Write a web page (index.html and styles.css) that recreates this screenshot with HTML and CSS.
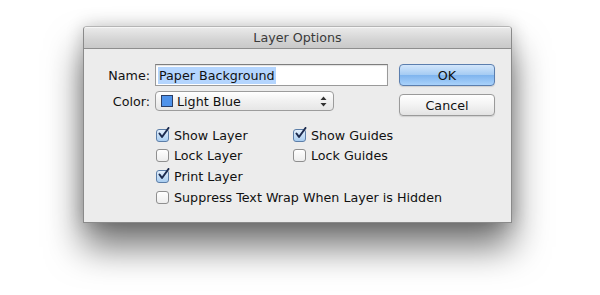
FILE: index.html
```html
<!DOCTYPE html>
<html>
<head>
<meta charset="utf-8">
<link rel="stylesheet" href="styles.css">
</head>
<body>
<div class="dialog">
  <div class="titlebar">Layer Options</div>
  <div class="content">
    <div class="top">
      <div class="form">
        <label class="lbl">Name:</label>
        <div class="input"><span class="sel">Paper Background</span></div>
        <label class="lbl">Color:</label>
        <div class="select">
          <span class="swatch"></span>
          <span class="seltext">Light Blue</span>
          <svg class="arrows" width="7" height="11" viewBox="0 0 7 11"><path d="M3.5 0.5 L6.5 4 L0.5 4 Z M0.5 7 L6.5 7 L3.5 10.5 Z" fill="#333"/></svg>
        </div>
      </div>
      <div class="buttons">
        <button class="btn ok">OK</button>
        <button class="btn">Cancel</button>
      </div>
    </div>
    <div class="checks">
      <div class="cb"><span class="box on"><svg width="13" height="13" viewBox="0 0 13 13"><path d="M2.5 6.5 L5 10 L11.5 1" fill="none" stroke="#1c2b4f" stroke-width="2" stroke-linecap="round" stroke-linejoin="round"/></svg></span>Show Layer</div>
      <div class="cb"><span class="box on"><svg width="13" height="13" viewBox="0 0 13 13"><path d="M2.5 6.5 L5 10 L11.5 1" fill="none" stroke="#1c2b4f" stroke-width="2" stroke-linecap="round" stroke-linejoin="round"/></svg></span>Show Guides</div>
      <div class="cb"><span class="box"></span>Lock Layer</div>
      <div class="cb"><span class="box"></span>Lock Guides</div>
      <div class="cb"><span class="box on"><svg width="13" height="13" viewBox="0 0 13 13"><path d="M2.5 6.5 L5 10 L11.5 1" fill="none" stroke="#1c2b4f" stroke-width="2" stroke-linecap="round" stroke-linejoin="round"/></svg></span>Print Layer</div>
      <div></div>
      <div class="cb wide"><span class="box"></span>Suppress Text Wrap When Layer is Hidden</div>
    </div>
  </div>
</div>
</body>
</html>
```
FILE: styles.css
```css
html {
  margin: 0;
  height: 100%;
  background: #ffffff;
}
body {
  margin: 0;
  box-sizing: border-box;
  min-height: 295px;
  padding: 26px 0 0 83px;
  font-family: "DejaVu Sans", "Liberation Sans", sans-serif;
  font-size: 12.7px;
  color: #111;
}
.dialog {
  width: 427px;
  height: 195px;
  border: 1px solid #8a8a8a;
  border-top-color: #b5b5b5;
  border-radius: 4px 4px 0 0;
  background: #ececec;
  box-shadow: 0 24px 36px rgba(0,0,0,0.55), 0 0 18px rgba(0,0,0,0.2);
  overflow: hidden;
}
.titlebar {
  height: 21px;
  line-height: 22px;
  text-align: center;
  color: #3a3a3a;
  font-size: 12.7px;
  background: linear-gradient(#ebebeb, #d4d4d4 60%, #c9c9c9);
  border-bottom: 1px solid #8e8e8e;
  box-shadow: inset 0 1px 0 #f6f6f6;
}
.content {
  padding: 15px 16px 0 0;
}
.top {
  display: flex;
  gap: 11px;
}
.form {
  display: grid;
  grid-template-columns: 66px 233px;
  column-gap: 5px;
  row-gap: 5px;
  align-content: start;
  align-items: center;
}
.lbl {
  text-align: right;
}
.input {
  height: 20px;
  border: 1px solid #9a9a9a;
  border-top-color: #7e7e7e;
  background: #fff;
  box-shadow: inset 0 1px 1px rgba(0,0,0,0.12);
  display: flex;
  align-items: center;
  padding-left: 2px;
}
.sel {
  background: #b4d5fe;
  line-height: 17px;
  padding: 0 1px;
}
.select {
  width: 172px;
  height: 18px;
  border: 1px solid #9c9c9c;
  border-radius: 4px;
  background: linear-gradient(#ffffff, #f1f1f1 50%, #e6e6e6);
  display: flex;
  align-items: center;
  padding-left: 5px;
}
.swatch {
  width: 10px;
  height: 10px;
  background: #4e92ea;
  border: 1px solid #2b3f66;
  margin-right: 4px;
}
.seltext {
  flex: 1;
}
.arrows {
  margin-right: 6px;
}
.buttons {
  display: flex;
  flex-direction: column;
  gap: 8px;
}
.btn {
  width: 96px;
  height: 22px;
  font-family: inherit;
  font-size: 12.7px;
  color: #111;
  border: 1px solid #9a9a9a;
  border-radius: 4px;
  background: linear-gradient(#ffffff, #f3f3f3 50%, #e3e3e3);
  box-shadow: 0 1px 1px rgba(0,0,0,0.12);
  padding: 0;
}
.btn.ok {
  border-color: #5b7eae;
  background: linear-gradient(#d3e6fb, #a4cbf3 50%, #7fb4ee 51%, #a9d2fb);
}
.checks {
  display: grid;
  grid-template-columns: 137px auto;
  row-gap: 6.7px;
  margin: 12px 0 0 72px;
}
.cb {
  display: flex;
  align-items: center;
  height: 14px;
}
.cb.wide {
  grid-column: 1 / 3;
}
.box {
  box-sizing: border-box;
  width: 13px;
  height: 13px;
  border: 1px solid #8f8f8f;
  border-radius: 3px;
  background: linear-gradient(#ffffff, #ededed);
  margin-right: 5px;
  position: relative;
}
.box.on {
  border-color: #5c7ea8;
  background: linear-gradient(#e4f0fc, #a9cdf0);
}
.box svg {
  position: absolute;
  left: 0;
  top: -3px;
}
```
